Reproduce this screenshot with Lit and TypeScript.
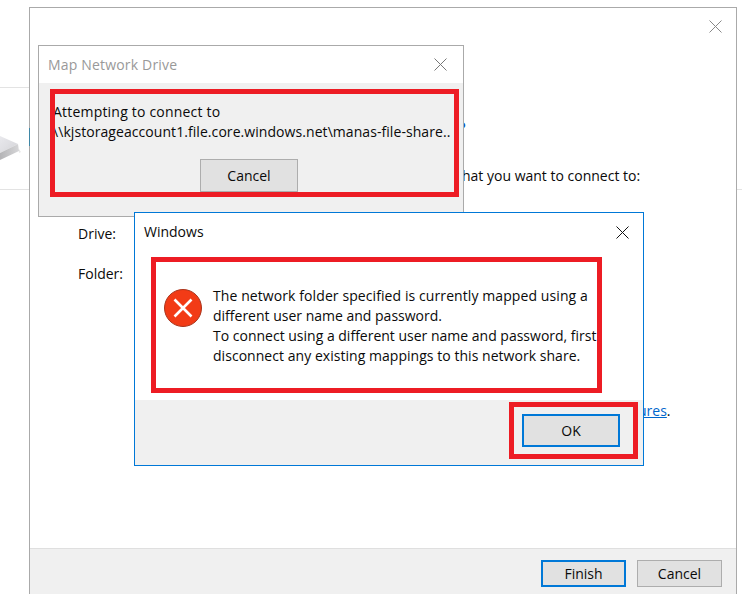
import { LitElement, html, css } from "lit";
import { customElement } from "lit/decorators.js";

const X = (color: string) => html`<svg class="x" width="13" height="13" viewBox="0 0 13 13"><path d="M.5.5l12 12M12.5.5l-12 12" fill="none" stroke=${color} stroke-width="1"/></svg>`;

@customElement("app-root")
export class AppRoot extends LitElement {
  static styles = css`
    :host { display: block; position: relative; width: 742px; height: 594px; overflow: hidden; background: #fff; font-family: "Open Sans", "Noto Sans", sans-serif; font-size: 14px; color: #0a0a0a; line-height: 20px; }
    * { box-sizing: border-box; }
    .x { display: block; flex: none; }
    .win { position: absolute; }
    .line { position: absolute; height: 1px; background: #e3e3e3; }
    .l1 { left: 0; top: 87px; width: 29px; }
    .l2 { left: 0; top: 189px; width: 29px; }
    .l3 { left: 737px; top: 189px; width: 5px; }
    .seam { position: absolute; left: 29px; top: 128px; width: 1px; height: 18px; background: #3f87a6; z-index: 1; }
    .main { left: 29px; top: 7px; width: 708px; height: 600px; border: 1px solid #aaa; background: #fff; }
    .main-x { position: absolute; left: 679px; top: 12px; }
    .lbl { position: absolute; white-space: nowrap; }
    .drive { left: 48px; top: 216px; }
    .folder { left: 48px; top: 256px; }
    .want { left: 432px; top: 158px; }
    .q { left: 427px; top: 107px; font-size: 20px; line-height: 28px; color: #0a50c8; }
    .fea { left: 608px; top: 393px; }
    .link { color: #0066cc; text-decoration: underline; }
    .footer { position: absolute; left: 0; right: 0; top: 540px; height: 60px; background: #f0f0f0; border-top: 1px solid #dfdfdf; display: flex; gap: 11px; padding: 11px 0 0 511px; }
    .btn { display: flex; align-items: center; justify-content: center; height: 27px; width: 85px; background: #e1e1e1; border: 1px solid #adadad; }
    .btn.def { border: 2px solid #0078d7; }
    .map { left: 38px; top: 45px; width: 426px; height: 172px; border: 1px solid #aaa; background: #f0f0f0; }
    .map-title { height: 37px; background: #fff; display: flex; align-items: center; justify-content: space-between; padding: 0 16px 0 9px; color: #999; letter-spacing: .18px; }
    .map-body { padding: 19px 0 0 14px; white-space: nowrap; }
    .ls-a { letter-spacing: .2px; }
    .ls-b { letter-spacing: .065px; }
    .ls-c { letter-spacing: .09px; }
    .ls-d { letter-spacing: .04px; }
    .map .btn { width: 98px; height: 33px; margin: 17px 0 0 147px; }
    .err { left: 134px; top: 212px; width: 510px; height: 254px; border: 1px solid #0078d7; background: #fff; }
    .err-title { height: 38px; display: flex; align-items: center; justify-content: space-between; padding: 0 14px 0 9px; }
    .err-body { height: 149px; display: flex; gap: 11px; padding: 35px 0 0 29px; }
    .err-text { white-space: nowrap; }
    .icon { flex: none; margin-top: 3px; }
    .err-foot { height: 65px; background: #f0f0f0; padding: 14px 0 0 387px; }
    .err-foot .btn { width: 98px; height: 33px; }
    .red { position: absolute; border: 5px solid #ed1c24; }
    .r1 { left: 50px; top: 89px; width: 409px; height: 108px; }
    .r2 { left: 151px; top: 257px; width: 451px; height: 136px; }
    .r3 { left: 509px; top: 402px; width: 129px; height: 57px; }
    .disk { position: absolute; left: 0; top: 132px; }
  `;
  render() {
    return html`
      <div class="line l1"></div>
      <div class="line l2"></div>
      <div class="line l3"></div>
      <svg class="disk" width="24" height="32" viewBox="0 0 24 32">
        <defs>
          <linearGradient id="top" x1="0" y1="0" x2="1" y2="1"><stop offset="0" stop-color="#e9e9ed"/><stop offset="1" stop-color="#d4d4d8"/></linearGradient>
          <linearGradient id="side" x1="0" y1="0" x2="1" y2="0"><stop offset="0" stop-color="#b4b4b6"/><stop offset="1" stop-color="#d6d6d8"/></linearGradient>
        </defs>
        <path d="M0 4 L18 12 L0 21Z" fill="url(#top)"/>
        <path d="M0 21 L18 12 L19 19 L0 28Z" fill="url(#side)"/>
        <path d="M19 17 L21 20 L19 21Z" fill="#e8e8e8"/>
      </svg>
      <div class="win main">
        <span class="main-x">${X("#888")}</span>
        <span class="lbl drive">Drive:</span>
        <span class="lbl folder">Folder:</span>
        <span class="lbl want">hat you want to connect to:</span>
        <span class="lbl q">?</span>
        <span class="lbl fea"><span class="link">ures</span>.</span>
        <div class="footer"><div class="btn def">Finish</div><div class="btn">Cancel</div></div>
      </div>
      <div class="seam"></div>
      <div class="win map">
        <div class="map-title"><span>Map Network Drive</span>${X("#777")}</div>
        <div class="map-body"><span class="ls-a">Attempting to connect to</span><br /><span class="ls-b">\\\\kjstorageaccount1.file.core.windows.net\\manas-file-share..</span>
          <div class="btn">Cancel</div>
        </div>
      </div>
      <div class="win err">
        <div class="err-title"><span>Windows</span>${X("#111")}</div>
        <div class="err-body">
          <svg class="icon" width="38" height="38" viewBox="0 0 38 38"><circle cx="19" cy="19" r="18.5" fill="#f23b16" stroke="#a9341c" stroke-width="1"/><path d="M10.5 10.5l17 17M27.5 10.5l-17 17" stroke="#fff" stroke-width="2.6"/></svg>
          <div class="err-text"><span class="ls-c">The network folder specified is currently mapped using a</span><br />different user name and password.<br />To connect using a different user name and password, first<br /><span class="ls-d">disconnect any existing mappings to this network share.</span></div>
        </div>
        <div class="err-foot"><div class="btn def">OK</div></div>
      </div>
      <div class="red r1"></div>
      <div class="red r2"></div>
      <div class="red r3"></div>
    `;
  }
}
